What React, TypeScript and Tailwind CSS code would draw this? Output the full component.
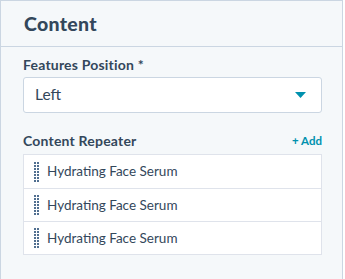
import React from "react";

const items = ["Hydrating Face Serum", "Hydrating Face Serum", "Hydrating Face Serum"];

const DragHandle = () => (
  <svg width="5" height="20" viewBox="0 0 5 20" className="shrink-0">
    {Array.from({ length: 7 }).map((_, r) => (
      <g key={r} fill="#516f90">
        <rect x="0" y={r * 3} width="2" height="2" />
        <rect x="3" y={r * 3} width="2" height="2" />
      </g>
    ))}
  </svg>
);

export default function App() {
  return (
    <div
      className="w-[343px] h-[279px] border-l border-r border-t border-[#cbd6e2] bg-[#f5f8fa] text-[#33475b]"
      style={{ fontFamily: "Lato, 'Noto Sans', sans-serif" }}
    >
      <div className="h-[46px] border-b border-[#cbd6e2] px-[23px] flex items-center">
        <h2 className="text-[19.5px] font-black tracking-[0.3px]">Content</h2>
      </div>

      <div className="pl-[22px] pr-[20px] pt-[8px]">
        <label className="block text-[14px] font-bold leading-[20px] tracking-[0.2px]">Features Position *</label>
        <div className="mt-[2px] h-[36px] bg-white border border-[#cbd6e2] rounded-[3px] flex items-center justify-between pl-[11px] pr-[15px]">
          <span className="text-[15.5px]">Left</span>
          <svg width="11" height="6" viewBox="0 0 11 6">
            <path d="M0 0h11L5.5 6z" fill="#0091ae" />
          </svg>
        </div>

        <div className="mt-[19px] flex items-center justify-between leading-[18px]">
          <span className="text-[14px] font-bold tracking-[0.2px]">Content Repeater</span>
          <button className="text-[11.5px] font-bold text-[#0091ae]">+ Add</button>
        </div>

        <ul className="mt-[4px] bg-white border border-[#dfe3eb]">
          {items.map((t, i) => (
            <li
              key={i}
              className={`h-[33px] flex items-center gap-[8px] pl-[10px] ${i > 0 ? "border-t border-[#dfe3eb]" : ""}`}
            >
              <DragHandle />
              <span className="text-[13.5px]">{t}</span>
            </li>
          ))}
        </ul>
      </div>
    </div>
  );
}
